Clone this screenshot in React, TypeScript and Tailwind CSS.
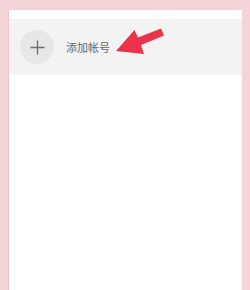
import React from "react";

export default function App() {
  return (
    <div className="relative w-[250px] h-[290px] bg-[#f2d4d9] pt-[10px] pl-[8px] pr-[8px] overflow-hidden">
      <div className="h-full bg-white border-l border-[#ecc6cc] pt-[9px]">
        <div className="h-[56px] bg-[#f3f3f3] flex items-center pl-[11px]">
          <div className="w-[34px] h-[34px] rounded-full bg-[#e7e7e7] flex items-center justify-center">
            <svg width="15" height="15" viewBox="0 0 15 15">
              <path d="M7.5 0.5V14.5M0.5 7.5H14.5" stroke="#6b6b6b" strokeWidth="1.3" />
            </svg>
          </div>
          <span
            className="ml-[12px] text-[11px] leading-none text-[#666666]"
            style={{ fontFamily: '"Noto Sans CJK SC", sans-serif' }}
          >
            添加帐号
          </span>
        </div>
      </div>
      <svg className="absolute left-0 top-0" width="250" height="290" viewBox="0 0 250 290">
        <polygon
          points="116,51 134.5,30 138,37.5 161,28.5 164,35.5 141,45 144,54"
          fill="#ea3349"
          strokeLinejoin="round"
        />
      </svg>
    </div>
  );
}
